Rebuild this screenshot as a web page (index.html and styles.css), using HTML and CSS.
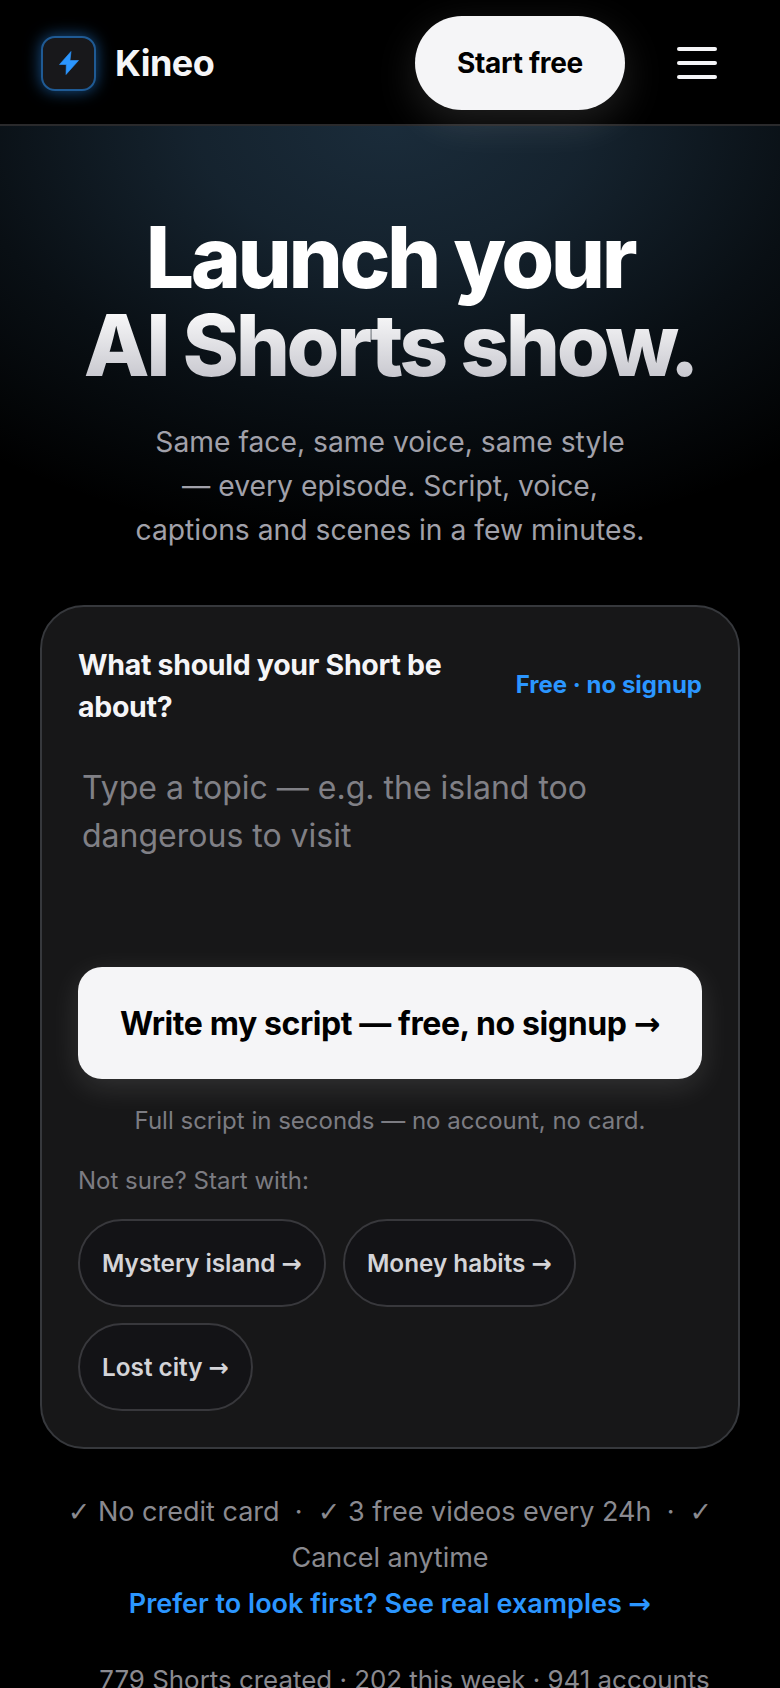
FILE: index.html
```html
<!DOCTYPE html>
<html lang="en">
<head>
  <meta charset="UTF-8">
  <meta name="viewport" content="width=device-width, initial-scale=1.0">
  <title>Kineo</title>
  <link rel="stylesheet" href="styles.css">
</head>
<body>

  <header class="topbar">
    <a class="brand" href="#">
      <span class="brand-icon">
        <svg width="20" height="24" viewBox="0 0 20 24"><path d="M12 .5.5 13.5h6.8L7 23.5 19.5 9.5H11z" fill="#2b96ff" stroke="#2b96ff" stroke-width=".6" stroke-linejoin="round"/></svg>
      </span>
      <span class="brand-name">Kineo</span>
    </a>
    <a class="start-btn" href="#">Start free</a>
    <button class="menu-btn" aria-label="Menu"><span></span><span></span><span></span></button>
  </header>

  <main>
    <section class="hero">
      <h1>Launch your<br>AI Shorts show.</h1>
      <p>Same face, same voice, same style<br>— every episode. Script, voice,<br>captions and scenes in a few minutes.</p>
    </section>

    <section class="card">
      <div class="card-head">
        <h2>What should your Short be about?</h2>
        <span class="free-tag">Free · no signup</span>
      </div>
      <textarea class="topic" rows="3" placeholder="Type a topic — e.g. the island too dangerous to visit"></textarea>
      <button class="write-btn">Write my script — free, no signup <span class="sym">→</span></button>
      <p class="write-note">Full script in seconds — no account, no card.</p>
      <p class="chips-label">Not sure? Start with:</p>
      <div class="chips">
        <button class="chip">Mystery island <span class="sym">→</span></button>
        <button class="chip">Money habits <span class="sym">→</span></button>
        <button class="chip">Lost city <span class="sym">→</span></button>
      </div>
    </section>

    <section class="below">
      <p class="perks"><span class="sym">✓</span> No credit card &nbsp;·&nbsp; <span class="sym">✓</span> 3 free videos every 24h &nbsp;·&nbsp; <span class="sym">✓</span> Cancel anytime</p>
      <a class="examples" href="#">Prefer to look first? See real examples <span class="sym">→</span></a>
      <p class="stats">779 Shorts created · 202 this week · 941 accounts</p>
    </section>
  </main>

</body>
</html>
```

FILE: styles.css
```css
body {
  font-family: Inter, "Noto Sans", sans-serif;
  background-color: #000;
  color: #fff;
  margin: 0;
  height: 1688px;
  overflow: hidden;
}

a {
  text-decoration: none;
}

.sym {
  font-family: "DejaVu Sans", sans-serif;
}

.topbar {
  display: flex;
  align-items: center;
  height: 122px;
  padding: 2px 63px 0 41px;
  border-bottom: 2px solid #2a2a2c;
  background-color: #000;
}

.brand {
  display: flex;
  align-items: center;
  gap: 19px;
  margin-right: auto;
}

.brand-icon {
  display: flex;
  align-items: center;
  justify-content: center;
  width: 51px;
  height: 51px;
  background-color: #18181b;
  border: 2px solid #1f5a94;
  border-radius: 14px;
  box-shadow: 0 0 16px rgba(43, 150, 255, 0.55);
}

.brand-name {
  color: #f5f5f7;
  font-size: 36px;
  font-weight: 700;
  letter-spacing: -0.5px;
}

.start-btn {
  display: flex;
  align-items: center;
  justify-content: center;
  width: 210px;
  height: 94px;
  margin-right: 52px;
  color: #000;
  background-color: #f5f5f7;
  border-radius: 47px;
  font-size: 28px;
  font-weight: 700;
  letter-spacing: -0.3px;
  box-shadow: 0 12px 40px rgba(255, 255, 255, 0.13);
}

.menu-btn {
  display: flex;
  flex-direction: column;
  justify-content: space-between;
  width: 40px;
  height: 32px;
  padding: 0;
  background: none;
  border: none;
}

.menu-btn span {
  height: 4px;
  background-color: #f5f5f7;
  border-radius: 2px;
}

.hero {
  padding: 87px 40px 53px;
  text-align: center;
  background: radial-gradient(ellipse 650px 420px at 50% 0, rgba(90, 150, 200, 0.29), rgba(90, 150, 200, 0.23) 30%, rgba(90, 150, 200, 0.1) 65%, rgba(90, 150, 200, 0) 100%);
}

.hero h1 {
  margin: 0 0 31px;
  font-size: 85.6px;
  line-height: 88px;
  font-weight: 800;
  letter-spacing: -0.04em;
  color: transparent;
  background: linear-gradient(180deg, #fff 0, #fff 90px, #c0c0c8 176px);
  -webkit-background-clip: text;
  background-clip: text;
}

.hero p {
  margin: 0;
  color: #a1a1aa;
  font-size: 28.25px;
  line-height: 44px;
}

.card {
  margin: 0 40px;
  padding: 37px 36px 36px;
  background-color: #171718;
  border: 2px solid #36383c;
  border-radius: 44px;
}

.card-head {
  display: flex;
  align-items: center;
  justify-content: space-between;
  gap: 24px;
}

.card-head h2 {
  margin: 0;
  width: 380px;
  font-size: 28.5px;
  line-height: 42px;
  font-weight: 700;
  letter-spacing: -0.3px;
  color: #f5f5f7;
}

.free-tag {
  margin-bottom: 3px;
  color: #2b96ff;
  font-size: 24px;
  font-weight: 700;
  white-space: nowrap;
}

.topic {
  display: block;
  box-sizing: border-box;
  width: 100%;
  height: 195px;
  margin: 20px 0 0;
  padding: 16px 4px;
  color: #fff;
  background: none;
  border: none;
  outline: none;
  resize: none;
  font-family: inherit;
  font-size: 32px;
  line-height: 48px;
}

.topic::placeholder {
  color: #808086;
}

.write-btn {
  display: block;
  width: 100%;
  height: 112px;
  margin-top: 24px;
  color: #000;
  background-color: #f5f5f7;
  border: none;
  border-radius: 24px;
  font-family: inherit;
  font-size: 32px;
  font-weight: 700;
  letter-spacing: -0.4px;
  box-shadow: 0 8px 30px rgba(255, 255, 255, 0.12);
}

.write-note {
  margin: 26px 0 0;
  color: #7c7c82;
  font-size: 24px;
  line-height: 32px;
  text-align: center;
}

.chips-label {
  margin: 28px 0 0;
  color: #7c7c82;
  font-size: 24px;
  line-height: 32px;
}

.chips {
  display: flex;
  flex-wrap: wrap;
  gap: 16px 17px;
  margin-top: 22px;
}

.chip {
  height: 88px;
  padding: 0 22px;
  color: #d4d4d8;
  background-color: #131316;
  border: 2px solid #38383c;
  border-radius: 44px;
  font-family: inherit;
  font-size: 24.3px;
  font-weight: 600;
}

.below {
  padding-top: 40px;
  text-align: center;
}

.perks {
  margin: 0 41px;
  color: #8a8a90;
  font-size: 27px;
  line-height: 46px;
}

.examples {
  display: block;
  color: #2b96ff;
  font-size: 27px;
  line-height: 46px;
  font-weight: 600;
}

.stats {
  margin: 35px 0 0;
  padding-left: 29px;
  color: #8a8a90;
  font-size: 25.9px;
  line-height: 36px;
}
```
